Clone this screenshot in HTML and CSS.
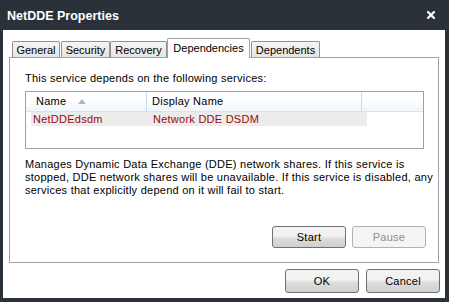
FILE: index.html
```
<!doctype html>
<html>
<head>
  <link rel="stylesheet" href="styles.css">
</head>
<body>
  <div class="window">
    <div class="titlebar">
      <span class="title">NetDDE Properties</span>
      <svg class="close" width="8" height="8" viewBox="0 0 8 8">
        <path d="M1 1 L7 7 M7 1 L1 7" stroke="#fff" stroke-width="2.2" stroke-linecap="square"/>
      </svg>
    </div>
    <div class="content">
      <div class="tabs">
        <div class="tab tab-general">General</div>
        <div class="tab tab-security">Security</div>
        <div class="tab tab-recovery">Recovery</div>
        <div class="tab tab-deps active">Dependencies</div>
        <div class="tab tab-dependents">Dependents</div>
      </div>
      <div class="panel">
        <p class="intro">This service depends on the following services:</p>
        <div class="listbox">
          <div class="header">
            <div class="col col-name">Name <span class="sort"></span></div>
            <div class="col col-display">Display Name</div>
            <div class="col col-rest"></div>
          </div>
          <div class="row">
            <div class="cell cell-name">NetDDEdsdm</div>
            <div class="cell cell-display">Network DDE DSDM</div>
          </div>
        </div>
        <p class="desc">Manages Dynamic Data Exchange (DDE) network shares. If this service is<br>stopped, DDE network shares will be unavailable. If this service is disabled, any<br>services that explicitly depend on it will fail to start.</p>
        <div class="actions">
          <button class="btn">Start</button>
          <button class="btn" disabled>Pause</button>
        </div>
      </div>
      <div class="footer">
        <button class="btn">OK</button>
        <button class="btn">Cancel</button>
      </div>
    </div>
  </div>
</body>
</html>
```

FILE: styles.css
```
body{
  margin:0;
  background:#2b3138;
  font-family:"Liberation Sans", Arial, sans-serif;
  font-size:11px;
  letter-spacing:0.25px;
  color:#000;
}
.window{
  width:449px;
  height:302px;
  display:flex;
  flex-direction:column;
}
.titlebar{
  height:30px;
  display:flex;
  align-items:center;
  padding:0 14px 0 7px;
}
.title{
  color:#fff;
  font-weight:bold;
  font-size:12.5px;
  letter-spacing:0;
  flex:1;
  margin-top:1px;
}
.close{
  margin-top:-1px;
}
.content{
  flex:1;
  background:#fff;
  margin:0 4px 4px 3px;
  padding:7px 5px 0 6px;
  display:flex;
  flex-direction:column;
}
.tabs{
  display:flex;
  align-items:flex-end;
  padding-left:3px;
  height:20px;
  position:relative;
  z-index:1;
}
.tab{
  box-sizing:border-box;
  height:16px;
  line-height:16px;
  text-align:center;
  letter-spacing:0;
  border:1px solid #919191;
  border-bottom:none;
  border-radius:2px 2px 0 0;
  background:linear-gradient(#f5f5f5, #e4e4e4);
  white-space:nowrap;
}
.tab-general{
  width:48px;
  margin-right:1px;
}
.tab-security{
  width:49px;
}
.tab-recovery{
  width:57px;
}
.tab-deps{
  width:83px;
}
.tab-dependents{
  width:69px;
  margin-left:1px;
}
.tab.active{
  height:20px;
  line-height:18px;
  background:#fff;
  margin-bottom:-1px;
  border-color:#a0a0a0;
}
.panel{
  height:204px;
  margin-right:1px;
  border:1px solid #a0a0a0;
  padding:0 12px 0 15px;
  display:flex;
  flex-direction:column;
}
.intro{
  margin:14px 0 6px;
  line-height:13px;
}
.listbox{
  height:56px;
  border:1px solid #a0a0a0;
  margin-right:2px;
}
.header{
  display:flex;
  height:19px;
  border-bottom:1px solid #d5e4f2;
  background:linear-gradient(#fff 40%, #f1f6fb);
}
.col{
  line-height:19px;
  padding-left:10px;
  border-right:1px solid #c5dcef;
}
.col-name{
  width:110px;
}
.col-display{
  width:209px;
  padding-left:5px;
}
.col-rest{
  flex:1;
  border-right:none;
}
.sort{
  display:inline-block;
  width:0;
  height:0;
  border-left:4px solid transparent;
  border-right:4px solid transparent;
  border-bottom:5px solid #b4b4b4;
  margin-left:8px;
  vertical-align:1px;
}
.row{
  display:flex;
  height:14px;
  line-height:14px;
  margin-left:5px;
  width:336px;
  background:#ececec;
  color:#9b0b0b;
}
.cell-name{
  width:119px;
  padding-left:2px;
}
.cell-display{
  padding-left:1px;
}
.desc{
  margin:9px 0 0;
  line-height:13px;
  white-space:nowrap;
}
.actions{
  margin-top:auto;
  margin-bottom:14px;
  display:flex;
  justify-content:flex-end;
  gap:6px;
}
.btn{
  width:74px;
  height:22px;
  font-family:"Liberation Sans", Arial, sans-serif;
  font-size:11px;
  letter-spacing:0.25px;
  color:#000;
  border:1px solid #707070;
  border-radius:3px;
  background:linear-gradient(#f2f2f2 45%, #dddddd 55%, #cfcfcf);
  padding:0;
}
.btn:disabled{
  color:#8f8f8f;
  border-color:#adb2b5;
  background:#f4f4f4;
}
.footer{
  display:flex;
  justify-content:flex-end;
  gap:7px;
  margin-top:6px;
}
.footer .btn{
  height:24px;
}
```
